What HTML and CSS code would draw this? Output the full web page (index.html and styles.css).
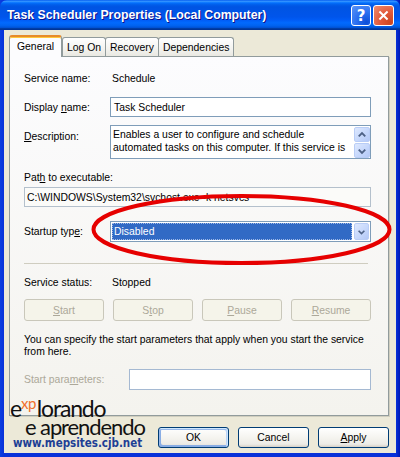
FILE: index.html
```html
<!DOCTYPE html>
<html lang="en">
<head>
    <title>Task Scheduler Properties</title>
    <meta charset="UTF-8">
    <link rel="stylesheet" href="styles.css">
</head>
<body>
    <div class="window">
        <div class="titlebar">
            <span class="title">Task Scheduler Properties (Local Computer)</span>
            <div class="title-buttons">
                <button class="tb-btn help">?</button>
                <button class="tb-btn close">
                    <svg viewBox="0 0 21 21"><path d="M6 6l9 9M15 6l-9 9"></path></svg>
                </button>
            </div>
        </div>

        <div class="dialog">
            <div class="tabs">
                <div class="tab active">General</div>
                <div class="tab">Log On</div>
                <div class="tab">Recovery</div>
                <div class="tab">Dependencies</div>
            </div>

            <div class="panel">
                <div class="row row-name">
                    <span class="label">Service name:</span>
                    <span class="value">Schedule</span>
                </div>

                <div class="row row-display">
                    <span class="label">Display <u>n</u>ame:</span>
                    <div class="field">Task Scheduler</div>
                </div>

                <div class="row row-desc">
                    <span class="label"><u>D</u>escription:</span>
                    <div class="field memo">
                        <div class="memo-text">Enables a user to configure and schedule automated tasks on this computer. If this service is</div>
                        <div class="scroll">
                            <span class="sbtn">
                                <svg viewBox="0 0 15 14"><path d="M4 8.5l3.5-3.5 3.5 3.5"></path></svg>
                            </span>
                            <span class="sbtn">
                                <svg viewBox="0 0 15 14"><path d="M4 5.5l3.5 3.5 3.5-3.5"></path></svg>
                            </span>
                        </div>
                    </div>
                </div>

                <div class="path-label">Pat<u>h</u> to executable:</div>
                <div class="field path">C:\WINDOWS\System32\svchost.exe -k netsvcs</div>

                <div class="row row-startup">
                    <span class="label">Startup typ<u>e</u>:</span>
                    <div class="combo">
                        <span class="combo-value">Disabled</span>
                        <span class="combo-btn">
                            <svg viewBox="0 0 15 17"><path d="M4 7l3.5 3.5 3.5-3.5"></path></svg>
                        </span>
                    </div>
                </div>

                <div class="sep"></div>

                <div class="row row-status">
                    <span class="label">Service status:</span>
                    <span class="value">Stopped</span>
                </div>

                <div class="svc-buttons">
                    <button class="btn" disabled><u>S</u>tart</button>
                    <button class="btn" disabled>S<u>t</u>op</button>
                    <button class="btn" disabled><u>P</u>ause</button>
                    <button class="btn" disabled><u>R</u>esume</button>
                </div>

                <p class="hint">You can specify the start parameters that apply when you start the service from here.</p>

                <div class="row row-params">
                    <span class="label muted">Start para<u>m</u>eters:</span>
                    <div class="field params"></div>
                </div>
            </div>

            <div class="footer">
                <button class="btn btn-default">OK</button>
                <button class="btn">Cancel</button>
                <button class="btn"><u>A</u>pply</button>
            </div>
        </div>

        <!-- marca d'agua do site -->
        <div class="brand">
            <div class="brand-top">e<span class="xp">xp</span>lorando</div>
            <div class="brand-mid">e aprendendo</div>
            <div class="brand-url">www.mepsites.cjb.net</div>
        </div>

        <svg class="highlight" viewBox="0 0 303 73">
            <ellipse cx="151.5" cy="36.5" rx="148" ry="33.5"></ellipse>
        </svg>
    </div>
</body>
</html>
```

FILE: styles.css
```css
:root {
    --xp-face: #ece9d8;
    --xp-edit: #7f9db9;
    --xp-tab-border: #919b9c;
    --xp-disabled: #aca899;
}

* {
    margin: 0;
    padding: 0;
    box-sizing: border-box;
}

body {
    width: 400px;
    height: 457px;
    overflow: hidden;
    font-family: "Liberation Sans", Arial, sans-serif;
    font-size: 10.4px;
    color: #000;
}

button {
    font: inherit;
    color: inherit;
}

.window {
    position: relative;
    width: 400px;
    height: 457px;
    display: flex;
    flex-direction: column;
    background: linear-gradient(to right, #0a3ee0, #0831d9 4px, #0831d9 396px, #0019b5);
}

/* Barra de titulo */
.titlebar {
    height: 30px;
    display: flex;
    align-items: center;
    justify-content: space-between;
    padding: 0 6px 0 7px;
    background: linear-gradient(to bottom, #0058ee 0%, #3593ff 4%, #288eff 6%, #127dff 8%, #036ffc 10%, #0262ee 14%, #0057e5 20%, #0054e3 24%, #0055eb 56%, #005bf5 66%, #026afe 76%, #0062ef 86%, #0052d6 92%, #0040ab 94%, #003092 100%);
    border-radius: 7px 7px 0 0;
}

.title {
    color: #fff;
    font-weight: bold;
    font-size: 12.3px;
    text-shadow: 1px 1px #0f1089;
}

.title-buttons {
    display: flex;
    gap: 2px;
    padding-top: 1px;
}

.tb-btn {
    width: 20px;
    height: 21px;
    border: 1px solid #fff;
    border-radius: 3px;
    display: flex;
    align-items: center;
    justify-content: center;
    color: #fff;
}

.help {
    background: radial-gradient(circle at 80% 85%, #0c4ed8 0%, #2a6ff0 45%, #5b95f8 100%);
    font-weight: bold;
    font-size: 15px;
    font-family: "DejaVu Sans", sans-serif;
}

.close {
    width: 21px;
    background: radial-gradient(circle at 85% 85%, #cc4620 0%, #e2593a 45%, #ee8d70 100%);
}

.close svg {
    width: 19px;
    height: 19px;
    stroke: #fff;
    stroke-width: 2.2;
    fill: none;
}

/* Corpo do dialogo */
.dialog {
    flex: 1;
    margin: 0 4px 4px;
    background: var(--xp-face);
    padding: 5px 7px 0 5px;
}

.tabs {
    display: flex;
    align-items: flex-end;
    height: 21px;
}

.tab {
    height: 19px;
    padding: 0 4px;
    display: flex;
    align-items: center;
    border: 1px solid var(--xp-tab-border);
    border-bottom: none;
    border-radius: 3px 3px 0 0;
    background: linear-gradient(to bottom, #fff, #f3f3ef 60%, #e9e8e2);
    margin-left: -1px;
}

.tab.active {
    position: relative;
    z-index: 1;
    height: 22px;
    margin-bottom: -1px;
    padding: 0 7px 1px;
    margin-left: 0;
    margin-right: 1px;
    background: #fcfcfe;
    border-top: 2px solid #e68b2c;
    box-shadow: inset 0 1px #ffc83c;
}

.panel {
    height: 360px;
    border: 1px solid var(--xp-tab-border);
    box-shadow: 1px 1px #d0cebf;
    background: linear-gradient(to bottom, #fcfcfe, #f4f3ee);
    padding: 14px 17px 0 14px;
}

.row {
    display: flex;
    align-items: center;
}

.label {
    width: 86px;
    flex-shrink: 0;
    white-space: nowrap;
}

.value {
    padding-left: 2px;
}

.muted {
    color: var(--xp-disabled);
}

.row-name {
    height: 14px;
}

.field {
    flex: 1;
    height: 20px;
    border: 1px solid var(--xp-edit);
    background: #fff;
    padding: 0 3px;
    display: flex;
    align-items: center;
    white-space: nowrap;
    overflow: hidden;
}

.row-display {
    margin-top: 12px;
}

.row-desc {
    margin-top: 8px;
    align-items: flex-start;
}

.row-desc .label {
    padding-top: 6px;
}

.memo {
    height: 34px;
    align-items: flex-start;
    padding: 0 0 0 2px;
    white-space: normal;
}

.memo-text {
    flex: 1;
    line-height: 13px;
    margin-top: 2px;
}

.scroll {
    width: 16px;
    display: flex;
    flex-direction: column;
    gap: 1px;
    padding-top: 1px;
}

.sbtn,
.combo-btn {
    display: flex;
    align-items: center;
    justify-content: center;
    border: 1px solid #b9cdf6;
    border-radius: 2px;
    background: linear-gradient(135deg, #dde8fe, #c4d6fb 60%, #b4c8f6);
}

.sbtn {
    height: 15px;
}

.sbtn svg,
.combo-btn svg {
    width: 14px;
    height: 14px;
    fill: none;
    stroke: #4d6185;
    stroke-width: 2;
}

.path-label {
    margin-top: 12px;
    height: 14px;
    line-height: 14px;
}

.path {
    margin-top: 2px;
    background: #fbfbf9;
    border-color: #b4c0cc;
    padding-left: 2px;
}

.row-startup {
    margin-top: 14px;
}

.combo {
    flex: 1;
    height: 21px;
    border: 1px solid var(--xp-edit);
    background: #fff;
    display: flex;
    padding: 1px;
    gap: 2px;
}

.combo-value {
    flex: 1;
    background: #316ac5;
    color: #fff;
    padding-left: 2px;
    display: flex;
    align-items: center;
    outline: 1px dotted #9fb9e6;
    outline-offset: -1px;
}

.combo-btn {
    width: 15px;
}

.sep {
    margin-top: 21px;
    margin-right: 3px;
    height: 1px;
    background: #cfcdc0;
}

.row-status {
    margin-top: 11px;
    height: 14px;
}

.svc-buttons {
    display: flex;
    gap: 9px;
    margin-top: 10px;
}

.btn {
    width: 71px;
    height: 21px;
    border: 1px solid #003c74;
    border-radius: 3px;
    background: linear-gradient(to bottom, #fff, #f4f3ee 55%, #ecebe6 85%, #d6d0c5);
    cursor: pointer;
}

.svc-buttons .btn {
    width: 80px;
    height: 22px;
}

.btn:disabled {
    border-color: #c9c7ba;
    background: #f5f4ea;
    color: var(--xp-disabled);
    cursor: default;
}

.btn-default {
    box-shadow: inset -1px 1px #cee7ff, inset 1px 2px #98b8ea, inset -2px 2px #bcd4f6, inset 1px -1px #89ade4, inset 2px -2px #89ade4;
}

.hint {
    margin-top: 13px;
    line-height: 12px;
}

.row-params {
    margin-top: 11px;
}

.row-params .label {
    width: 105px;
}

.params {
    height: 21px;
    border-color: #a5b9d2;
}

.footer {
    display: flex;
    justify-content: flex-end;
    gap: 9px;
    padding-top: 11px;
}

/* Marca d'agua */
.brand {
    position: absolute;
    left: 10px;
    top: 398px;
    font-family: Lato, "Open Sans", sans-serif;
    color: #111;
}

.brand-top {
    font-size: 23px;
    line-height: 21px;
    letter-spacing: -1.2px;
}

.xp {
    color: #f0702a;
    font-size: 15px;
    line-height: 10px;
    position: relative;
    top: -8px;
    margin-right: 1px;
    letter-spacing: -0.5px;
}

.brand-mid {
    padding-left: 15px;
    font-size: 22px;
    line-height: 16px;
    letter-spacing: -1.1px;
}

.brand-url {
    padding-left: 3px;
    margin-top: 2px;
    font-family: "DejaVu Sans Condensed", "DejaVu Sans", sans-serif;
    font-stretch: condensed;
    font-weight: bold;
    font-size: 11.5px;
    line-height: 13px;
    color: #1d3f95;
}

.highlight {
    position: absolute;
    left: 90px;
    top: 193px;
    width: 303px;
    height: 73px;
    pointer-events: none;
}

.highlight ellipse {
    fill: none;
    stroke: #e60000;
    stroke-width: 4;
}
```
